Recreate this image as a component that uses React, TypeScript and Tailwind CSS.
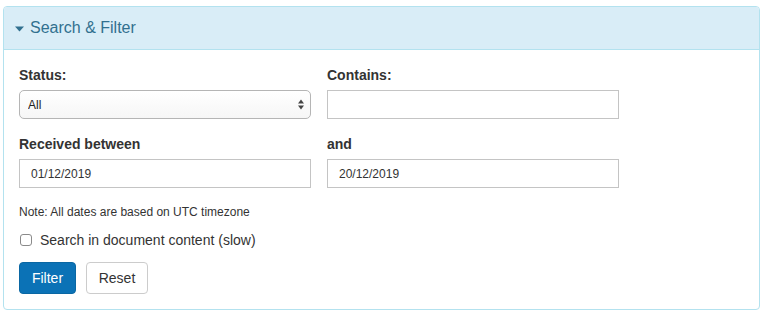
import React from "react";

export default function App() {
  const font = { fontFamily: '"Liberation Sans", Arial, Helvetica, sans-serif' };
  return (
    <div className="w-[767px] h-[314px] bg-white pt-[6px] pl-[3px]" style={font}>
      <div className="w-[757px] border border-[#b3e2ef] rounded-[4px] text-[#333]">
        <div className="h-[43px] bg-[#d9edf7] border-b border-[#b3e2ef] rounded-t-[3px] flex items-center pl-[11px] text-[#31708f]">
          <svg width="9" height="6" viewBox="0 0 9 6" className="mr-[6px] mt-[1px]">
            <path d="M0 0.5 L9 0.5 L4.5 5.5 Z" fill="#31708f" />
          </svg>
          <span className="text-[16px] leading-[20px]">Search &amp; Filter</span>
        </div>
        <div className="pt-[15px] px-[15px] pb-[15px]">
          <div className="grid grid-cols-[292px_292px] gap-x-[16px]">
            <div>
              <div className="text-[14px] font-bold leading-[20px] mb-[5px]">Status:</div>
              <div className="relative h-[29px] w-[292px]">
                <select className="appearance-none w-full h-full border border-[#b5b5b5] rounded-[5px] bg-gradient-to-b from-white to-[#f6f6f6] pl-[8px] text-[12px] text-[#222] outline-none">
                  <option>All</option>
                </select>
                <svg className="absolute right-[7px] top-[9px] pointer-events-none" width="6" height="11" viewBox="0 0 6 11">
                  <path d="M0 4.5 L3 0.5 L6 4.5 Z" fill="#444" />
                  <path d="M0 6.5 L3 10.5 L6 6.5 Z" fill="#444" />
                </svg>
              </div>
            </div>
            <div>
              <div className="text-[14px] font-bold leading-[20px] mb-[5px]">Contains:</div>
              <input className="w-[292px] h-[29px] border border-[#c4c4c4] px-[12px] text-[12px] outline-none" />
            </div>
            <div className="mt-[15px]">
              <div className="text-[14px] font-bold leading-[20px] mb-[5px]">Received between</div>
              <input
                className="w-[292px] h-[29px] border border-[#c4c4c4] px-[11px] text-[12px] text-[#333] outline-none"
                defaultValue="01/12/2019"
              />
            </div>
            <div className="mt-[15px]">
              <div className="text-[14px] font-bold leading-[20px] mb-[5px]">and</div>
              <input
                className="w-[292px] h-[29px] border border-[#c4c4c4] px-[11px] text-[12px] text-[#333] outline-none"
                defaultValue="20/12/2019"
              />
            </div>
          </div>
          <div className="mt-[15px] text-[12px] leading-[18px] text-[#333]">
            Note: All dates are based on UTC timezone
          </div>
          <div className="mt-[9px] flex items-center h-[20px]">
            <span className="w-[12px] h-[12px] border border-[#8a8a8a] rounded-[3px] bg-white mr-[8px] ml-[1px]" />
            <span className="text-[14px] leading-[20px]">Search in document content (slow)</span>
          </div>
          <div className="mt-[12px] flex gap-[10px]">
            <button className="w-[57px] h-[32px] bg-[#0b72b6] border border-[#0a67a3] rounded-[4px] text-white text-[14px]">
              Filter
            </button>
            <button className="w-[62px] h-[32px] bg-white border border-[#cccccc] rounded-[4px] text-[#333] text-[14px]">
              Reset
            </button>
          </div>
        </div>
      </div>
    </div>
  );
}
